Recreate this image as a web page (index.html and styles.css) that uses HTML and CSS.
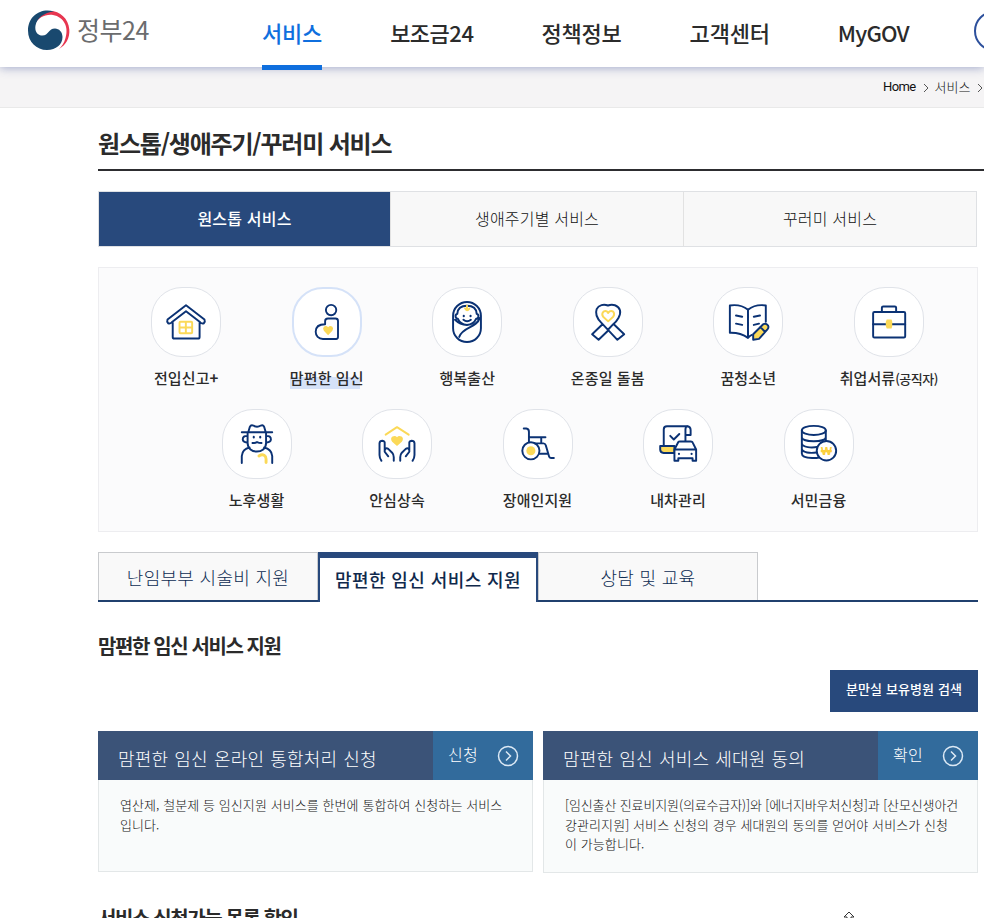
FILE: index.html
```html
<!DOCTYPE html>
<html lang="ko">

<head>
    <meta charset="UTF-8" />
    <meta name="viewport" content="width=device-width, initial-scale=1.0" />
    <title>원스톱/생애주기/꾸러미 서비스 | 정부24</title>
    <link rel="stylesheet" href="styles.css">
</head>

<body>
    <header class="header">
        <a href="#" class="logo">
            <svg viewBox="0 0 42 42" width="42" height="42">
                <path d="M31 39C38 35 42 28 41.3 19.500C40.500 8.500 32 1 22 1C14 1 8 6 7 14C10 8 17 4 25 5C36 7 41 17 37.500 28C36.300 33 33.500 36.500 31 39Z" fill="#e73650" />
                <path d="M26 1.500C13 -2.500 0 6 0 20.500C0 32 8.500 40 19 40C28 40 34.500 34.500 34.500 27C34.500 22 31 18.500 27 18.500C20.500 18.500 20.500 25.500 14.500 25.500C9.500 25.500 6.500 21.500 7.500 15.500C9 8 16 2.500 26 1.500Z" fill="#19496f" />
            </svg>
            <span>정부24</span>
        </a>
        <nav class="gnb">
            <a href="#" class="on">서비스</a>
            <a href="#">보조금24</a>
            <a href="#">정책정보</a>
            <a href="#">고객센터</a>
            <a href="#" class="en">MyGOV</a>
        </nav>
        <button class="search" aria-label="검색"></button>
    </header>

    <div class="location">
        <span class="home">Home</span>
        <svg class="arr" viewBox="0 0 6 10"><path d="M1 1l4 4-4 4" /></svg>
        <span>서비스</span>
        <svg class="arr" viewBox="0 0 6 10"><path d="M1 1l4 4-4 4" /></svg>
    </div>

    <main class="content">
        <h1>원스톱/생애주기/꾸러미 서비스</h1>

        <div class="main-tab">
            <a href="#" class="on">원스톱 서비스</a>
            <a href="#">생애주기별 서비스</a>
            <a href="#">꾸러미 서비스</a>
        </div>

        <ul class="onestop">
            <li>
                <svg class="ico" viewBox="0 0 210 210">
                    <path d="M105 53L48 97Q45 104 50 109Q56 111 61 106L105 72L149 106Q154 111 160 109Q165 104 162 97Z M64 107V151Q64 156 69 156H142Q147 156 147 151V107" />
                    <path class="y" d="M88 104H121Q124 104 124 107V137Q124 140 121 140H88Q85 140 85 137V107Q85 104 88 104ZM104.500 104V140M85 122H124" />
                </svg>
                <span>전입신고<b>+</b></span>
            </li>
            <li class="on">
                <svg class="ico" viewBox="0 0 210 210">
                    <circle cx="118" cy="67" r="16.500" />
                    <path d="M99 112V103Q99 94 108 94H132Q140 94 140 102V153Q140 159 134 159H92C78 159 69 149 69 136C69 121 80 112 99 112Z" />
                    <path class="yf" d="M108.500 147L95 133Q90 125 95 120Q103 114 108.500 122Q114 114 122 120Q127 125 122 133Z" />
                </svg>
                <span>맘편한 임신</span>
            </li>
            <li>
                <svg class="ico" viewBox="0 0 210 210">
                    <rect x="62" y="43" width="86" height="124" rx="43" />
                    <path d="M75 80C76 63 88 55 105 55C122 55 134 63 135 80Q142 82 140 90Q138 95 133 95Q126 112 105 114Q84 112 77 95Q72 95 70 90Q68 82 75 80Z M68 98Q83 113 105 114 M144 93C135 124 92 119 81 151 M94 98Q105 107 117 98" />
                    <path class="dot" d="M95 86v1M116 86v1" />
                    <path class="y" d="M99 63Q105 74 112 64M105 55V66" />
                </svg>
                <span>행복출산</span>
            </li>
            <li>
                <svg class="ico" viewBox="0 0 210 210">
                    <path d="M105 54C92 49 76 52 70 65C64 82 73 96 84 107L134 160L155 143L122 111C132 103 146 84 142 69C137 52 118 49 105 54Z M88 112L56 143L76 160L104 133 M105 129L122 111" />
                    <path class="y" d="M105.500 103L90 89Q84 80 91 73Q100 68 105.500 77Q112 68 121 73Q127 80 121 89Z" />
                </svg>
                <span>온종일 돌봄</span>
            </li>
            <li>
                <svg class="ico" viewBox="0 0 210 210">
                    <path d="M105 67Q82 49 49 54V138Q82 137 105 154V67Q128 49 160 54V104M105 154Q111 147 117 145M68 85L87 89M68 110L87 114M123 89L142 85M123 114L139 110" />
                    <path class="mix" d="M152 112Q160 107 167 116Q170 122 165 128L139 157L121 160V143ZM143 120L157 135" />
                </svg>
                <span>꿈청소년</span>
            </li>
            <li>
                <svg class="ico" viewBox="0 0 210 210">
                    <rect x="56" y="74" width="99" height="79" rx="4" />
                    <path d="M83 74V61Q83 57 87 57H123Q127 57 127 61V74M56 112H155" />
                    <path class="yf" d="M98 97H113Q116 104 115 111Q116 119 113 125H98Q94 119 95 111Q94 104 98 97Z" />
                </svg>
                <span>취업서류<small>(공직자)</small></span>
            </li>
            <li>
                <svg class="ico" viewBox="0 0 210 210">
                    <path d="M58 69H152M78 69L83 52Q86 45 94 48Q105 56 117 48Q124 45 127 52L132 69M76 69V102C76 137 133 137 133 102V69M76 80Q61 79 61 91Q62 101 76 100M133 80Q148 79 148 91Q147 101 133 100M58 164V142Q60 121 82 116M152 164V142Q150 121 127 116M91 102Q99 102 105 99Q111 102 119 102" />
                    <path class="dot" d="M95 83v2M115 83v2" />
                    <path class="y thick" d="M111 142Q120 136 127 140Q133 144 133 151V162" />
                </svg>
                <span>노후생활</span>
            </li>
            <li>
                <svg class="ico" viewBox="0 0 210 210">
                    <path d="M57 157Q51 149 51 139V102Q52 95 60 95Q68 96 67 104V129L78 143M67 124Q70 115 78 120L90 132Q95 138 95 146V157M153 157Q159 149 159 139V102Q158 95 150 95Q142 96 143 104V129L132 143M143 124Q140 115 132 120L120 132Q115 138 115 146V157" />
                    <path class="y" d="M70 76L105 53L141 76" />
                    <path class="yf" d="M105 111L90 98Q83 88 91 82Q100 78 105 84Q110 78 119 82Q127 88 120 98Z" />
                </svg>
                <span>안심상속</span>
            </li>
            <li>
                <svg class="ico" viewBox="0 0 210 210">
                    <path d="M61 57H69Q77 58 77 67V99M77 84H128M115 84V103M94 103H122Q127 103 129 109L139 143Q140 148 145 148H154M109 135H135" />
                    <circle cx="83" cy="126" r="26.500" />
                    <circle class="yf" cx="83" cy="126" r="14" />
                </svg>
                <span>장애인지원</span>
            </li>
            <li>
                <svg class="ico" viewBox="0 0 210 210">
                    <path class="mix" d="M50 111H94V133H61Q50 132 50 122Z" />
                    <path d="M61 111V60Q61 50 71 50H132Q144 50 144 62V77H128V96M128 77V60Q128 52 134 50M81 80L92 91L109 74" />
                    <path class="w" d="M94 122L106 99Q107 97 111 97H145Q149 97 150 100L161 122V157H150V149H106V157H94ZM94 122H161" />
                    <path class="dot" d="M108 135v1M147 135v1" />
                </svg>
                <span>내차관리</span>
            </li>
            <li>
                <svg class="ico" viewBox="0 0 210 210">
                    <ellipse cx="89" cy="63" rx="37" ry="14" />
                    <path d="M52 63V134C52 152 115 152 115 140M126 63V104M52 84C52 101 126 101 126 84M52 103C52 116 84 118 103 113M52 120C52 132 80 134 97 131" />
                    <circle class="w" cx="128" cy="126" r="30" />
                    <text x="128" y="138">₩</text>
                </svg>
                <span>서민금융</span>
            </li>
        </ul>

        <div class="sub-tab">
            <a href="#">난임부부 시술비 지원</a>
            <a href="#" class="on">맘편한 임신 서비스 지원</a>
            <a href="#">상담 및 교육</a>
        </div>

        <h2>맘편한 임신 서비스 지원</h2>

        <div class="btn-area">
            <a href="#" class="btn">분만실 보유병원 검색</a>
        </div>

        <div class="cards">
            <section class="card">
                <div class="card-head">
                    <h3>맘편한 임신 온라인 통합처리 신청</h3>
                    <a href="#">신청 <svg viewBox="0 0 22 22"><circle cx="11" cy="11" r="9.500" /><path d="M9 6.500l4.500 4.500L9 15.500" /></svg></a>
                </div>
                <p>엽산제, 철분제 등 임신지원 서비스를 한번에 통합하여 신청하는 서비스<br>입니다.</p>
            </section>
            <section class="card tall">
                <div class="card-head">
                    <h3>맘편한 임신 서비스 세대원 동의</h3>
                    <a href="#">확인 <svg viewBox="0 0 22 22"><circle cx="11" cy="11" r="9.500" /><path d="M9 6.500l4.500 4.500L9 15.500" /></svg></a>
                </div>
                <p><span class="narrow">[임신출산 진료비지원(의료수급자)]와 [에너지바우처신청]과 [산모신생아건</span><br>강관리지원] 서비스 신청의 경우 세대원의 동의를 얻어야 서비스가 신청<br>이 가능합니다.</p>
            </section>
        </div>

        <div class="list-head">
            <h2>서비스 신청가능 목록 확인</h2>
            <svg class="up" viewBox="0 0 12 12"><path d="M6 1L1 6H4V11H8V6H11Z" /></svg>
        </div>
    </main>
</body>

</html>
```
FILE: styles.css
```css
* {
    box-sizing: border-box;
}

body {
    margin: 0;
    height: 918px;
    overflow: hidden;
    background: #fff;
    color: #2b2b2b;
    font-family: "Noto Sans CJK KR", sans-serif;
}

a {
    color: inherit;
    text-decoration: none;
}

h1, h2, h3, p, ul {
    margin: 0;
    padding: 0;
}

/* header */
.header {
    position: relative;
    display: flex;
    height: 67px;
    background: #fff;
    box-shadow: 0 1px 9px rgba(60, 80, 150, 0.45);
}

.logo {
    display: flex;
    flex: none;
    width: 262px;
    padding: 10px 0 0 28px;
    color: #6b6c6e;
    font-size: 25px;
    line-height: 39px;
    letter-spacing: -0.5px;
}

.logo span {
    margin-left: 7px;
}

.gnb {
    display: flex;
    flex: none;
    gap: 68px;
}

.gnb a {
    height: 70px;
    font-size: 22px;
    font-weight: 500;
    line-height: 64px;
    letter-spacing: -0.2px;
    white-space: nowrap;
}

.gnb a:nth-child(2) {
    letter-spacing: -0.5px;
}

.gnb a.on {
    color: #0f6fde;
    border-bottom: 5px solid #0f6fde;
}

.gnb .en {
    letter-spacing: -0.8px;
}

.search {
    flex: none;
    width: 40px;
    height: 40px;
    margin: 11px 0 0 65px;
    border: 2px solid #2d509c;
    border-radius: 50%;
    background: #fff;
}

.location {
    display: flex;
    align-items: center;
    height: 41px;
    padding: 0 0 2px 883px;
    background: #f5f4f5;
    border-bottom: 1px solid #e9e9e9;
    color: #111;
    font-size: 13px;
    font-weight: 300;
    white-space: nowrap;
}

.location .home {
    width: 33px;
    font-family: Roboto, sans-serif;
    font-weight: 400;
    letter-spacing: -0.6px;
}

.arr {
    flex: none;
    width: 6px;
    height: 10px;
    margin: 4px 6px 0 7px;
    fill: none;
    stroke: #555;
}

/* content */
.content {
    width: 880px;
    margin-left: 98px;
}

h1 {
    width: 886px;
    height: 63px;
    border-bottom: 2px solid #2d2d30;
    font-size: 24px;
    line-height: 70px;
    letter-spacing: -1.2px;
}

.main-tab {
    display: flex;
    width: 879px;
    height: 56px;
    margin-top: 20px;
    border: 1px solid #dfe1e4;
    background: #f8f8f8;
}

.main-tab a {
    flex: 1;
    border-left: 1px solid #e2e2e2;
    color: #111;
    font-size: 16px;
    font-weight: 300;
    line-height: 53px;
    letter-spacing: 0.2px;
    text-align: center;
}

.main-tab a.on {
    flex: 0 0 291px;
    border: 0;
    background: #28497c;
    color: #fff;
    font-weight: 500;
}

.onestop {
    display: flex;
    flex-wrap: wrap;
    justify-content: center;
    align-content: flex-start;
    height: 265px;
    margin-top: 20px;
    padding: 19px 18px 0 17px;
    border: 1px solid #ededf0;
    background: #fbfbfc;
    list-style: none;
}

.onestop li {
    display: flex;
    flex-direction: column;
    align-items: center;
    width: 140.5px;
    height: 122px;
}

.ico {
    width: 70px;
    height: 70px;
    border: 1px solid #e0e3e9;
    border-radius: 31px;
    background: #fff;
    fill: none;
    stroke: #0b3274;
    stroke-width: 6;
    stroke-linecap: round;
    stroke-linejoin: round;
}

.on .ico {
    border: 2px solid #d5e2f8;
}

.ico .y {
    stroke: #fbd958;
}

.ico .thick {
    stroke-width: 9;
}

.ico .yf {
    fill: #fbd958;
    stroke: none;
}

.ico .mix {
    fill: #fbd958;
}

.ico .w {
    fill: #fff;
}

.ico .dot {
    stroke-width: 6.500;
}

.ico text {
    fill: #fbd03c;
    stroke: none;
    font-family: "Liberation Sans", sans-serif;
    font-size: 36px;
    font-weight: 700;
    text-anchor: middle;
}

.onestop span {
    margin-top: 10px;
    font-size: 15px;
    font-weight: 500;
    line-height: 22px;
    letter-spacing: 0.1px;
    white-space: nowrap;
}

.onestop .on span {
    background: linear-gradient(#d5e2f8, #d5e2f8) 0 100% / 70px 12px no-repeat;
}

.onestop small {
    font-size: 13px;
    letter-spacing: -0.5px;
}

/* sub tab */
.sub-tab {
    display: flex;
    height: 50px;
    margin-top: 20px;
    border-bottom: 2px solid #20406e;
    color: #0d2c52;
    font-size: 18px;
    font-weight: 300;
    line-height: 48px;
    letter-spacing: 0.3px;
    text-align: center;
}

.sub-tab a {
    width: 220px;
    height: 48px;
    border: 1px solid #c9cbce;
    border-bottom: 0;
    background: #f9f9f9;
}

.sub-tab a.on {
    height: 50px;
    border: 2px solid #28497c;
    border-top-width: 6px;
    border-bottom: 0;
    background: #fff;
    color: #10294c;
    font-weight: 500;
    line-height: 43px;
    letter-spacing: 0.4px;
}

h2 {
    font-size: 20px;
    line-height: 30px;
    letter-spacing: -1.4px;
}

.sub-tab + h2 {
    margin-top: 29px;
}

.btn-area {
    display: flex;
    justify-content: flex-end;
    margin-top: 9px;
}

.btn {
    width: 148px;
    height: 42px;
    background: #28497c;
    color: #fff;
    font-size: 13px;
    font-weight: 500;
    line-height: 38px;
    letter-spacing: 0.1px;
    text-align: center;
}

.cards {
    display: flex;
    align-items: flex-start;
    gap: 10px;
    margin-top: 19px;
}

.card {
    width: 435px;
    height: 141px;
    border: 1px solid #e3e7e8;
    border-top: 0;
    background: #f9fbfb;
}

.card.tall {
    height: 142px;
}

.card-head {
    display: flex;
    height: 49px;
    margin: 0 -1px;
    background: #3b5378;
    color: #fff;
}

.card h3 {
    flex: 1;
    padding-left: 20px;
    font-size: 18px;
    font-weight: 300;
    line-height: 55px;
    letter-spacing: 0.2px;
    word-spacing: 0.8px;
}

.card-head a {
    display: flex;
    justify-content: space-between;
    width: 100px;
    padding: 0 14px 0 15px;
    background: #326b9c;
    font-size: 16px;
    font-weight: 300;
    line-height: 47px;
    letter-spacing: 0.2px;
}

.card-head svg {
    width: 22px;
    height: 22px;
    margin-top: 14px;
    fill: none;
    stroke: #dce9f5;
    stroke-width: 1.500;
}

.card p {
    padding: 15px 0 0 21px;
    color: #111;
    font-size: 13px;
    font-weight: 300;
    line-height: 19.500px;
    letter-spacing: 0.08px;
    white-space: nowrap;
}

.card .narrow {
    letter-spacing: -0.13px;
}

.list-head {
    display: flex;
    align-items: center;
    margin-top: 30px;
}

.up {
    width: 12px;
    height: 12px;
    margin: -2px 0 0 545px;
    fill: #fff;
    stroke: #333;
}
```
